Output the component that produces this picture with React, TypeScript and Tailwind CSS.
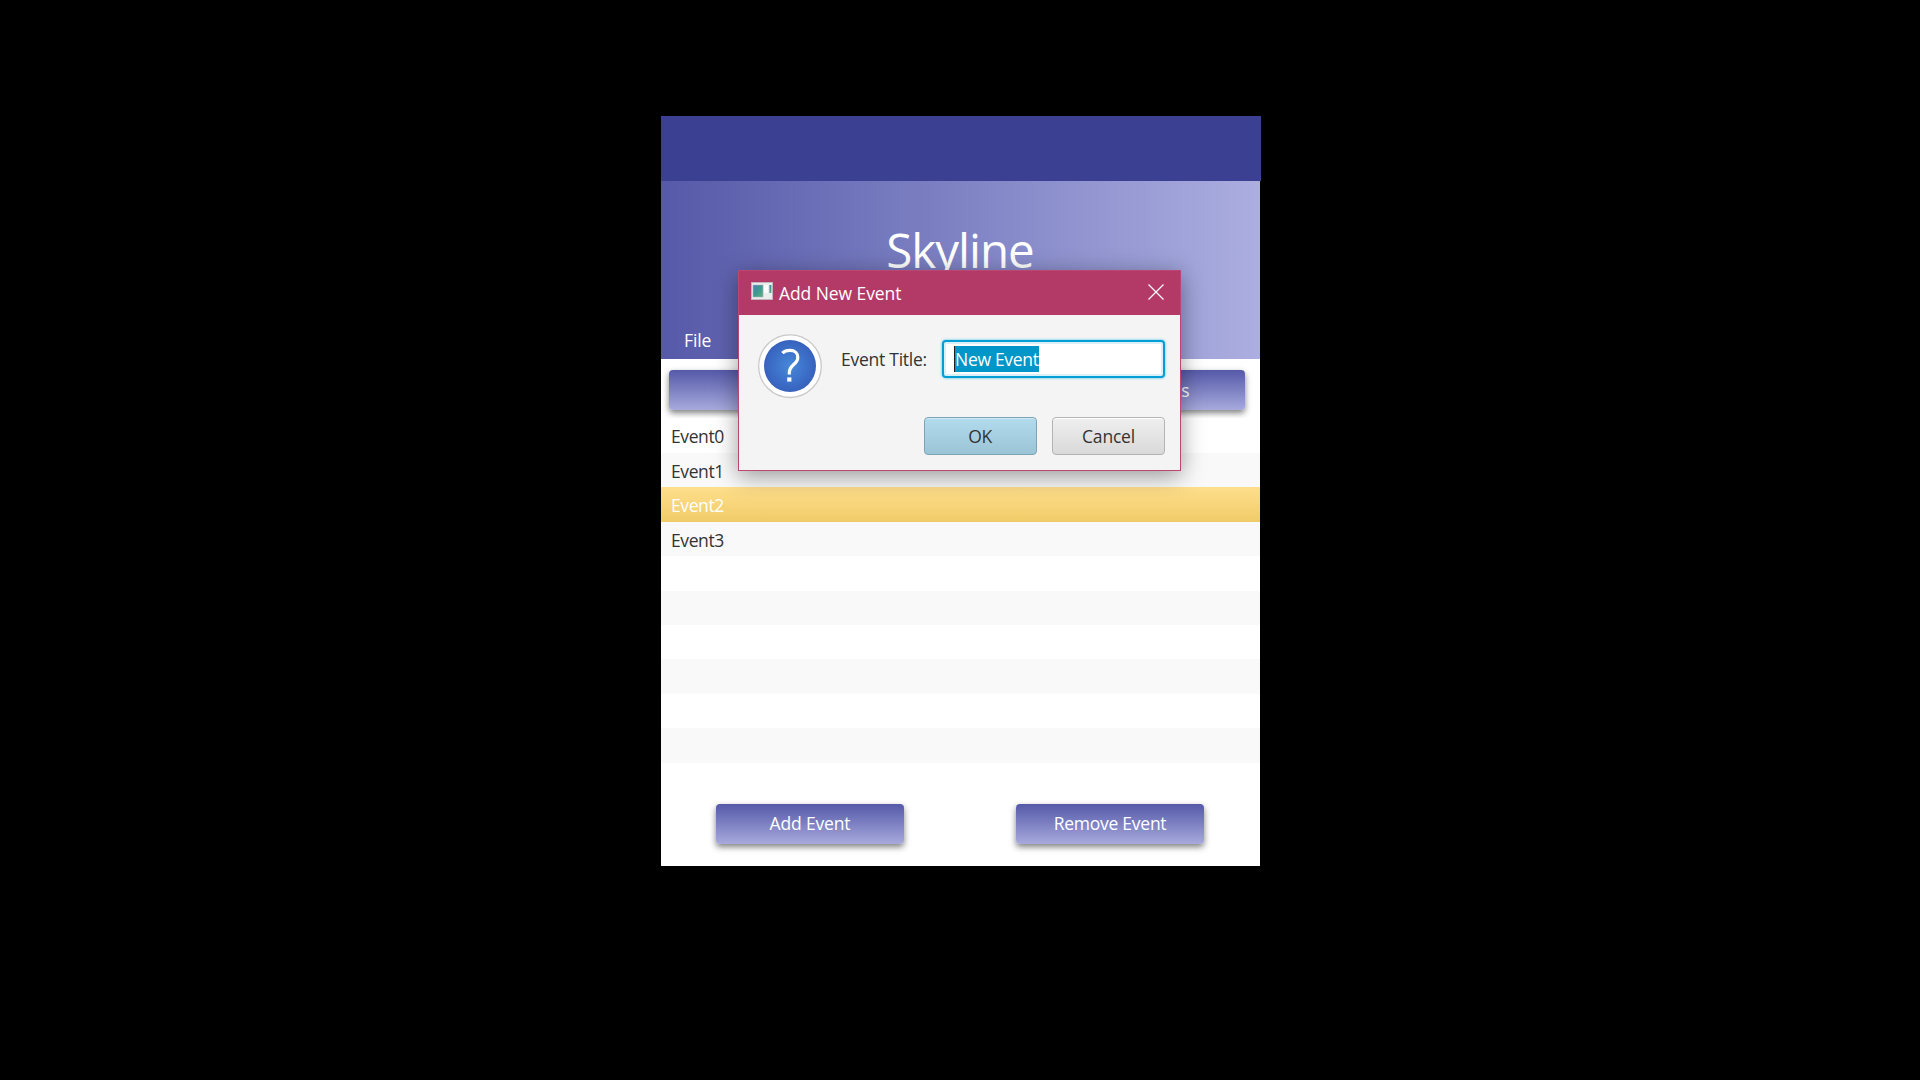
import React from "react";

const BUTTON =
  "flex items-center justify-center rounded-[4px] bg-linear-to-b from-[#5659a8] to-[#a8aadc] text-white shadow-[0_3px_6px_rgba(0,0,0,0.5)]";

const EVENTS = ["Event0", "Event1", "Event2", "Event3", "", "", "", "", "", "", ""];

function rowStyle(i: number) {
  if (i === 2) return "bg-linear-to-b from-[#ffdf8c] to-[#f0cb67] text-white";
  return i % 2 ? "bg-[#f9f9f9] text-[#333]" : "bg-white text-[#333]";
}

function EventList() {
  return (
    <ul className="mt-[8.4px] flex flex-col">
      {EVENTS.map((name, i) => (
        <li key={i} className={`flex h-[34.45px] items-center pt-[1.4px] pl-[10px] tracking-[-0.4px] ${rowStyle(i)}`}>
          {name}
        </li>
      ))}
    </ul>
  );
}

function AppIcon() {
  return (
    <svg width="22" height="18" viewBox="0 0 22 18">
      <defs>
        <linearGradient id="pane" x1="0" y1="0" x2="1" y2="1">
          <stop offset="0" stopColor="#4f7fb0" />
          <stop offset="0.5" stopColor="#3c9a90" />
          <stop offset="1" stopColor="#63b083" />
        </linearGradient>
      </defs>
      <rect x="0.5" y="0.5" width="21" height="17" fill="#eceded" stroke="#c2b3bd" />
      <rect x="2" y="3" width="10" height="12" fill="url(#pane)" stroke="#a9b5c0" strokeWidth="0.6" />
      <rect x="13" y="3" width="4" height="8" fill="#fbfbfb" />
      <rect x="18.4" y="3" width="2" height="8" fill="url(#pane)" />
    </svg>
  );
}

function QuestionIcon() {
  return (
    <svg width="66" height="66" viewBox="0 0 66 66">
      <defs>
        <radialGradient id="ball">
          <stop offset="0" stopColor="#4788da" />
          <stop offset="1" stopColor="#3762bd" />
        </radialGradient>
      </defs>
      <circle cx="33" cy="33.2" r="31.3" fill="#fff" stroke="#c9c9c9" strokeWidth="1.3" />
      <circle cx="33" cy="33" r="26" fill="url(#ball)" />
      <path
        d="M25.4 20.2C27.4 18.2 30 17.4 32.9 17.4C38 17.4 40.8 20.2 40.8 24.4C40.8 31.4 32.3 31.8 32.3 39.6V41.4"
        fill="none"
        stroke="#fff"
        strokeWidth="3.2"
      />
      <rect x="30.2" y="44.4" width="4.2" height="4.2" fill="#fff" />
    </svg>
  );
}

function Dialog() {
  return (
    <div className="absolute top-[154px] left-[77px] flex h-[201px] w-[443px] flex-col border border-[#bd4672] bg-[#f4f4f4] shadow-[0_5px_22px_rgba(0,0,0,0.4)]">
      <div className="flex h-[44px] shrink-0 items-center bg-[#b33a66] pr-[16px] pl-[11.5px] text-white">
        <div className="mb-[4px]">
          <AppIcon />
        </div>
        <span className="ml-[6.5px] tracking-[-0.08px]">Add New Event</span>
        <svg className="mb-[2px] ml-auto" width="16" height="16" viewBox="0 0 16 16">
          <path d="M0.5 0.5L15.5 15.5M15.5 0.5L0.5 15.5" stroke="#fff" strokeWidth="1.2" />
        </svg>
      </div>
      <div className="flex flex-1 items-start">
        <div className="mt-[18px] ml-[18px]">
          <QuestionIcon />
        </div>
        <span className="mt-[32px] ml-[18px] w-[101px] leading-[24px] tracking-[-0.25px] text-[#333]">Event Title:</span>
        <div className="mt-[25px] flex h-[38px] w-[223px] items-center rounded-[4px] border-2 border-[#039ed3] bg-white pl-[10px] shadow-[0_0_2px_1px_#9fdcf0,inset_0_0_0_2px_#d9f0f8]">
          <span className="flex h-[26px] w-[85px] items-center border-l border-[#222] bg-[#0096c9] tracking-[-0.3px] whitespace-nowrap text-white">
            New Event
          </span>
        </div>
      </div>
      <div className="mr-[15px] mb-[15px] flex justify-end gap-[15px] text-[#333]">
        <div className="flex h-[38px] w-[113px] items-center justify-center rounded-[4px] border border-[#7ba4b7] bg-linear-to-b from-[#b2dbee] to-[#9cc4d7] pr-px tracking-[-0.3px] shadow-[inset_0_1px_0_#cfeaf5]">
          OK
        </div>
        <div className="flex h-[38px] w-[113px] items-center justify-center rounded-[4px] border border-[#b3b3b3] bg-linear-to-b from-[#efefef] to-[#d9d9d9] tracking-[-0.2px] shadow-[inset_0_1px_0_#fff]">
          Cancel
        </div>
      </div>
    </div>
  );
}

export default function App() {
  return (
    <div className="flex h-[1080px] w-[1920px] items-start bg-black pt-[116px] pl-[661px] font-['Open_Sans',sans-serif] text-[17.5px] leading-[24px]">
      <main className="relative flex h-[750px] w-[599px] flex-col bg-white">
        <div className="h-[65px] w-[600px] shrink-0 bg-[#3b4093]" />
        <header className="flex h-[178px] shrink-0 flex-col bg-linear-to-r from-[#5659a8] to-[#acaee0] text-white">
          <h1 className="mt-[37px] pr-px text-center text-[47.5px] leading-[64px] tracking-[-1px]">Skyline</h1>
          <span className="mt-auto mb-[7px] pl-[23px] tracking-[-0.1px]">File</span>
        </header>
        <div className="mt-[11px] flex shrink-0 justify-between pr-[15px] pl-[8px]">
          <div className={`${BUTTON} h-[40px] w-[188px]`} />
          <div className={`${BUTTON} h-[40px] w-[188px] pb-px`}>
            <span className="ml-[59px]">es</span>
          </div>
        </div>
        <EventList />
        <div className="mt-auto mb-[22px] flex justify-between pr-[56px] pl-[55px]">
          <div className={`${BUTTON} h-[40px] w-[188px] pb-[3px] tracking-[-0.15px]`}>Add Event</div>
          <div className={`${BUTTON} h-[40px] w-[188px] pb-[3px] tracking-[-0.25px]`}>Remove Event</div>
        </div>
        <Dialog />
      </main>
    </div>
  );
}
